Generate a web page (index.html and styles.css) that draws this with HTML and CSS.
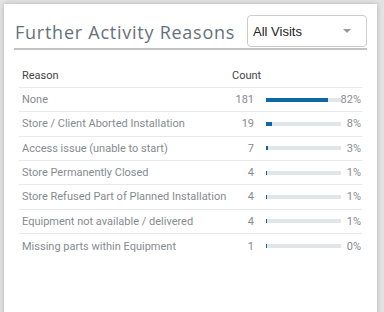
FILE: index.html
```html
<!DOCTYPE html>
<html>
<head>
<meta charset="utf-8">
<link rel="stylesheet" href="styles.css">
</head>
<body>
<div class="card">
  <div class="card-head">
    <h2 class="title">Further Activity Reasons</h2>
    <div class="select">
      <span class="select-text">All Visits</span>
      <span class="caret"></span>
    </div>
  </div>
  <div class="table">
    <div class="row head">
      <div class="c-reason">Reason</div>
      <div class="c-count">Count</div>
      <div></div>
      <div></div>
    </div>
    <div class="row">
      <div class="c-reason">None</div>
      <div class="c-count num">181</div>
      <div class="c-bar"><div class="track"><div class="fill" style="width:82.3%"></div></div></div>
      <div class="c-pct">82%</div>
    </div>
    <div class="row">
      <div class="c-reason">Store / Client Aborted Installation</div>
      <div class="c-count num">19</div>
      <div class="c-bar"><div class="track"><div class="fill" style="width:8.6%"></div></div></div>
      <div class="c-pct">8%</div>
    </div>
    <div class="row">
      <div class="c-reason">Access issue (unable to start)</div>
      <div class="c-count num">7</div>
      <div class="c-bar"><div class="track"><div class="fill" style="width:3.2%"></div></div></div>
      <div class="c-pct">3%</div>
    </div>
    <div class="row">
      <div class="c-reason">Store Permanently Closed</div>
      <div class="c-count num">4</div>
      <div class="c-bar"><div class="track"><div class="fill" style="width:1.8%"></div></div></div>
      <div class="c-pct">1%</div>
    </div>
    <div class="row">
      <div class="c-reason">Store Refused Part of Planned Installation</div>
      <div class="c-count num">4</div>
      <div class="c-bar"><div class="track"><div class="fill" style="width:1.8%"></div></div></div>
      <div class="c-pct">1%</div>
    </div>
    <div class="row">
      <div class="c-reason">Equipment not available / delivered</div>
      <div class="c-count num">4</div>
      <div class="c-bar"><div class="track"><div class="fill" style="width:1.8%"></div></div></div>
      <div class="c-pct">1%</div>
    </div>
    <div class="row">
      <div class="c-reason">Missing parts within Equipment</div>
      <div class="c-count num">1</div>
      <div class="c-bar"><div class="track"><div class="fill" style="width:0.45%"></div></div></div>
      <div class="c-pct">0%</div>
    </div>
  </div>
</div>
</body>
</html>
```
FILE: styles.css
```css
html, body {
  margin: 0;
  padding: 0;
  height: 100%;
}
body {
  background: #e3e3e3;
  font-family: Roboto, "Liberation Sans", sans-serif;
  overflow: hidden;
}
.card {
  margin: 4px 7px 0 4px;
  height: 320px;
  background: #fff;
  box-shadow: 0 0 5px rgba(0, 0, 0, 0.22);
  padding: 11px 10px 0 10px;
  box-sizing: border-box;
}
.card-head {
  display: flex;
  align-items: flex-end;
  justify-content: space-between;
  border-bottom: 2px solid #c2c2c2;
  padding-bottom: 1px;
}
.title {
  margin: 0 0 3px 1px;
  font-family: "Open Sans", sans-serif;
  font-weight: 500;
  font-size: 18px;
  line-height: 24px;
  color: #67717c;
  letter-spacing: 0.75px;
}
.select {
  width: 120px;
  height: 32px;
  box-sizing: border-box;
  border: 1px solid #cccccc;
  border-radius: 4px;
  display: flex;
  align-items: center;
  justify-content: space-between;
  padding: 0 15px 0 5px;
}
.select-text {
  font-family: "Liberation Sans", Arial, sans-serif;
  font-size: 13px;
  color: #222;
}
.caret {
  width: 0;
  height: 0;
  border-left: 4px solid transparent;
  border-right: 4px solid transparent;
  border-top: 4px solid #999;
}
.table {
  margin: 14px 5px 0 5px;
  font-size: 11px;
  color: #868b91;
}
.row {
  display: grid;
  grid-template-columns: 210px 32px 80px 21px;
  align-items: center;
  height: 24.33px;
  box-sizing: border-box;
  border-bottom: 1px solid #e6e9eb;
}
.row:last-child {
  border-bottom: none;
}
.row.head {
  height: 24px;
  color: #444;
}
.c-reason {
  padding-left: 3px;
  white-space: nowrap;
}
.c-count {
  padding-left: 3px;
}
.c-count.num {
  padding-left: 0;
  text-align: right;
  padding-right: 7px;
}
.c-bar {
  padding-left: 5px;
}
.track {
  width: 75px;
  height: 4px;
  background: #e2e6e9;
}
.fill {
  height: 100%;
  background: #0d67a3;
}
.c-pct {
  justify-self: end;
  padding-right: 1px;
  white-space: nowrap;
}
```
